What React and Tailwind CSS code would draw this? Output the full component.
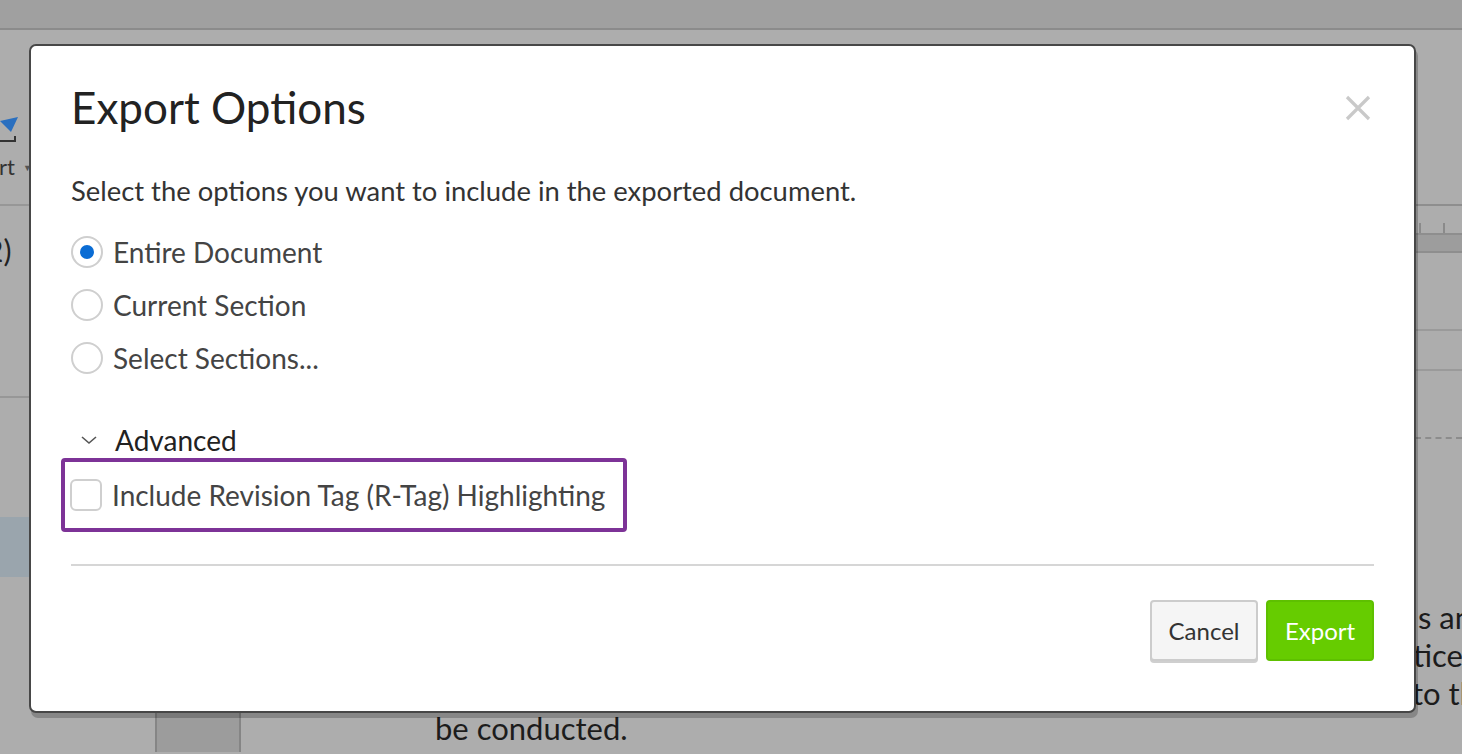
import React, { useState } from 'react';

const Radio = ({ checked, label, onClick }) => (
  <button onClick={onClick} className="flex items-center h-[53px] text-left">
    <span className="w-[32px] h-[32px] rounded-full border-2 border-[#cfcfcf] bg-white flex items-center justify-center">
      {checked && <span className="w-[14px] h-[14px] rounded-full bg-[#0a6cd4]" />}
    </span>
    <span className="ml-[10px] text-[28px] text-[#444444]">{label}</span>
  </button>
);

const App = () => {
  const [scope, setScope] = useState('entire');
  const [rtag, setRtag] = useState(false);

  return (
    <div className="relative w-[1462px] h-[754px] overflow-hidden bg-[#adadad] font-['Lato','Liberation_Sans',sans-serif]">
      {/* dimmed app behind the dialog */}
      <div className="h-[30px] bg-[#a0a0a0] border-b-2 border-[#8b8b8b]" />
      <div className="flex h-[722px]">
        <div className="w-[29px] flex flex-col">
          <div className="h-[86px]" />
          <div className="relative h-[28px]">
            <svg width="29" height="28" viewBox="0 0 29 28">
              <path d="M0 5 L18 1 L11 16 Z" fill="#2a6fbf" />
              <path d="M0 25 H15 V20" fill="none" stroke="#333" strokeWidth="2" />
            </svg>
          </div>
          <div className="h-[34px] flex items-end text-[22px] text-[#333] leading-none">
            <span className="-ml-[1px]">rt</span>
            <span className="ml-[8px] mb-[6px] text-[9px] text-[#555]">▼</span>
          </div>
          <div className="h-[28px] border-b-2 border-[#979797]" />
          <div className="h-[59px] flex items-end text-[30px] text-[#222] leading-none">
            <span className="-ml-[14px]">2)</span>
          </div>
          <div className="h-[133px] border-b-2 border-[#979797]" />
          <div className="h-[119px]" />
          <div className="h-[60px] bg-[#9aa5ad]" />
        </div>

        <div className="flex-1 flex flex-col">
          <div className="flex-1" />
          <div className="h-[42px] flex">
            <div className="ml-[126px] w-[86px] bg-[#9c9c9c] border-x-2 border-[#858585]" />
            <div className="ml-[194px] pt-[3px] text-[31px] text-[#1c1c1c] leading-none whitespace-nowrap">be conducted.</div>
          </div>
        </div>

        <div className="w-[47px] flex flex-col overflow-hidden">
          <div className="h-[176px] border-b-2 border-[#8e8e8e]" />
          <div className="h-[27px] flex items-end">
            <div className="ml-[4px] w-[2px] h-[10px] bg-[#8a8a8a]" />
            <div className="ml-[22px] w-[2px] h-[10px] bg-[#8a8a8a]" />
          </div>
          <div className="h-[20px] bg-[#9d9d9d] border-y-2 border-[#8e8e8e]" />
          <div className="h-[78px] border-b-2 border-[#9a9a9a]" />
          <div className="h-[40px] border-b-2 border-[#9a9a9a]" />
          <div className="h-[68px] border-b-2 border-dashed border-[#8c8c8c]" />
          <div className="h-[159px]" />
          <div className="flex flex-col text-[31px] text-[#1c1c1c] leading-[38px] whitespace-nowrap">
            <span className="ml-[3px]">s an</span>
            <span className="-ml-[2px]">tice</span>
            <span className="-ml-[3px]">to th</span>
          </div>
        </div>
      </div>

      {/* dialog */}
      <div className="absolute left-[29px] top-[44px] z-10 w-[1387px] h-[669px] bg-white border-2 border-[#474747] rounded-[7px] shadow-[2px_5px_0_rgba(0,0,0,0.22)] flex flex-col px-[40px]">
        <div className="flex items-center justify-between h-[122px]">
          <h1 className="text-[44px] text-[#222222] leading-none">Export Options</h1>
          <button className="mr-[3px] mt-[2px]">
            <svg width="26" height="26" viewBox="0 0 26 26">
              <path d="M2 2 L24 24 M24 2 L2 24" stroke="#c9c9c9" strokeWidth="3.2" />
            </svg>
          </button>
        </div>

        <p className="text-[27.4px] text-[#333333] leading-none mt-[9px]">
          Select the options you want to include in the exported document.
        </p>

        <div className="flex flex-col mt-[21px]">
          <Radio checked={scope === 'entire'} label="Entire Document" onClick={() => setScope('entire')} />
          <Radio checked={scope === 'current'} label="Current Section" onClick={() => setScope('current')} />
          <Radio checked={scope === 'select'} label="Select Sections..." onClick={() => setScope('select')} />
        </div>

        <div className="flex items-center h-[36px] mt-[38px]">
          <svg width="20" height="12" viewBox="0 0 20 12" className="ml-[8px]">
            <path d="M3 3 L10 9 L17 3" fill="none" stroke="#555" strokeWidth="1.6" />
          </svg>
          <span className="ml-[16px] text-[28px] text-[#222222]">Advanced</span>
        </div>

        <div className="-ml-[10px] w-[566px] h-[74px] border-[4px] border-[#7d3397] rounded-[4px] flex items-center">
          <button onClick={() => setRtag(!rtag)} className="flex items-center ml-[5px]">
            <span className="w-[32px] h-[32px] rounded-[6px] border-2 border-[#cfcfcf] bg-white flex items-center justify-center">
              {rtag && <span className="text-[#0a6cd4] text-[20px] leading-none">✓</span>}
            </span>
            <span className="ml-[10px] text-[28px] text-[#444444]">Include Revision Tag (R-Tag) Highlighting</span>
          </button>
        </div>

        <div className="mt-[32px] border-t-2 border-[#d6d6d6]" />

        <div className="flex justify-end gap-[8px] mt-[34px]">
          <button className="w-[108px] h-[61px] rounded-[4px] bg-[#f5f5f5] border-2 border-[#cccccc] shadow-[0_2px_0_#cfcfcf] text-[24px] text-[#333333]">Cancel</button>
          <button className="w-[108px] h-[61px] rounded-[4px] bg-[#66cc00] border-2 border-[#5ec000] text-[24px] text-white">Export</button>
        </div>
      </div>
    </div>
  );
};

export default App;
